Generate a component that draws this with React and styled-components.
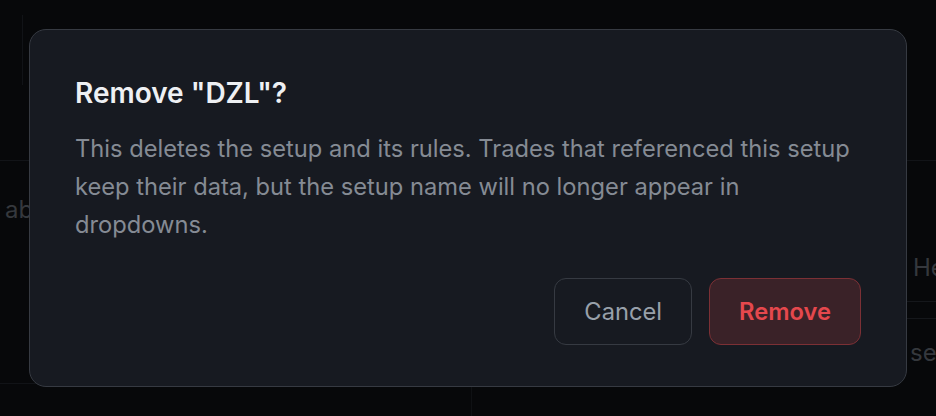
import React from "react";
import styled, { createGlobalStyle } from "styled-components";

const GlobalStyle = createGlobalStyle`
  html, body {
    margin: 0;
    padding: 0;
    background: #07080a;
    font-family: Inter, "Noto Sans", sans-serif;
    overflow: hidden;
  }
`;

export default function App() {
  return (
    <>
      <GlobalStyle />
      <Page>
        <Header>
          <HeaderCard />
        </Header>
        <Body>
          <LeftPanel>
            <FaintRow $top={37}>ab</FaintRow>
          </LeftPanel>
          <RightPanel>
            <FaintRow $top={95} $pad={6}>Help</FaintRow>
            <Divider $top={21} />
            <Divider $top={16} />
            <FaintRow $top={22} $pad={3}>setup</FaintRow>
          </RightPanel>
        </Body>
      </Page>

      <Overlay>
        <Dialog role="alertdialog" aria-labelledby="dlg-title">
          <Title id="dlg-title">Remove "DZL"?</Title>
          <Message>
            This deletes the setup and its rules. Trades that referenced this
            setup keep their data, but the setup name will no longer appear in
            dropdowns.
          </Message>
          <Actions>
            <Button>Cancel</Button>
            <Button $danger>Remove</Button>
          </Actions>
        </Dialog>
      </Overlay>
    </>
  );
}

/* dimmed page behind the dialog */

const Page = styled.div`
  height: 416px;
  display: flex;
  flex-direction: column;
  background: #07080a;
`;

const Header = styled.div`
  height: 161px;
  flex-shrink: 0;
  border-bottom: 1px solid #121418;
  padding: 15px 0 0 22px;
  box-sizing: border-box;
`;

const HeaderCard = styled.div`
  width: 200px;
  height: 70px;
  border-left: 1px solid #111317;
`;

const Body = styled.div`
  flex: 1;
  display: grid;
  grid-template-columns: 440px 1fr;
  column-gap: 31px;
`;

const LeftPanel = styled.div`
  display: flex;
  flex-direction: column;
  height: 222px;
  border-right: 1px solid #0f1114;
  border-bottom: 1px solid #111317;
`;

const RightPanel = styled.div`
  display: flex;
  flex-direction: column;
  border-left: 1px solid #0f1114;
  padding-left: 435px;
  overflow: hidden;
`;

const FaintRow = styled.div`
  margin-top: ${(p) => p.$top}px;
  padding-left: ${(p) => p.$pad || 5}px;
  font-size: 24px;
  line-height: 24px;
  white-space: nowrap;
  color: #35383d;
`;

const Divider = styled.div`
  margin-top: ${(p) => p.$top}px;
  height: 1px;
  background: #15171b;
`;

/* dialog */

const Overlay = styled.div`
  position: fixed;
  inset: 0;
  display: flex;
  align-items: center;
  justify-content: center;
`;

const Dialog = styled.div`
  width: 878px;
  box-sizing: border-box;
  padding: 47px 45px 41px;
  background: #171a21;
  border: 1.5px solid #363a42;
  border-radius: 17px;
  display: flex;
  flex-direction: column;
`;

const Title = styled.h2`
  margin: 0;
  font-size: 28px;
  line-height: 32px;
  font-weight: 600;
  color: #eef0f3;
`;

const Message = styled.p`
  margin: 21px 0 0;
  font-size: 23.7px;
  line-height: 38px;
  color: #858b94;
`;

const Actions = styled.div`
  margin-top: 34px;
  display: flex;
  justify-content: flex-end;
  gap: 17px;
`;

const Button = styled.button`
  height: 67px;
  padding: 0 29px;
  border-radius: 12px;
  font-family: Inter, "Noto Sans", sans-serif;
  font-size: 23.7px;
  font-weight: ${(p) => (p.$danger ? 600 : 400)};
  color: ${(p) => (p.$danger ? "#e5484d" : "#98a0aa")};
  background: ${(p) => (p.$danger ? "#3a2228" : "transparent")};
  border: 1.5px solid ${(p) => (p.$danger ? "#7c3035" : "#363a42")};
  cursor: pointer;
`;
